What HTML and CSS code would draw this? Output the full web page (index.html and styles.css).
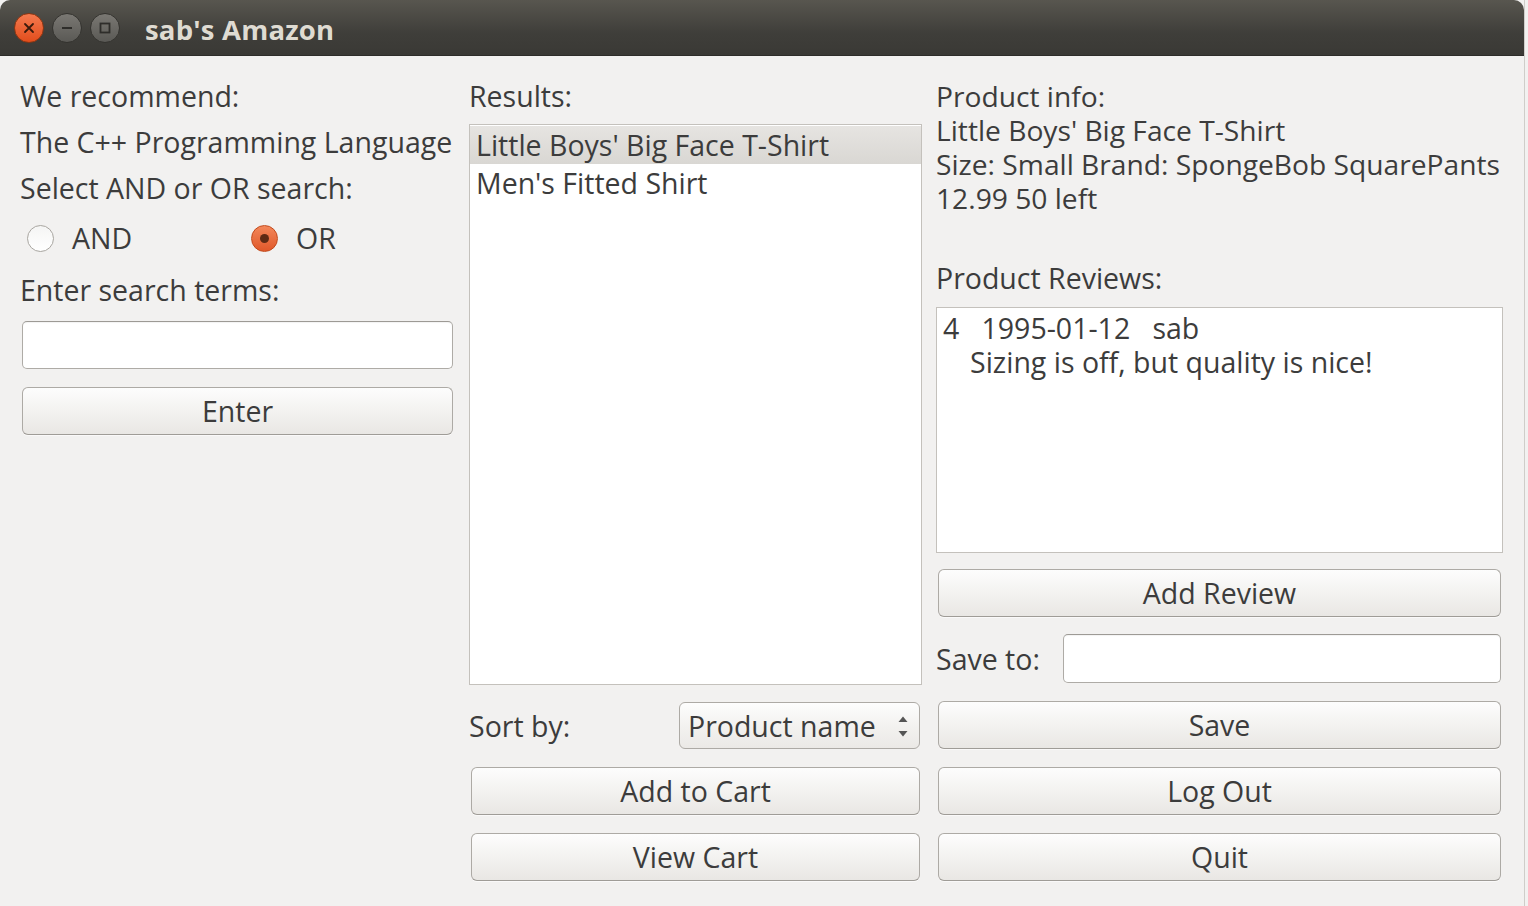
FILE: index.html
```html
<!DOCTYPE html>
<html>
<head>
<meta charset="utf-8">
<title>sab's Amazon</title>
<link rel="stylesheet" href="styles.css">
</head>
<body>
<div class="window">
  <div class="titlebar">
    <div class="wm-buttons">
      <span class="wm-btn close">
        <svg width="12" height="12" viewBox="0 0 12 12"><path d="M2 2 L10 10 M10 2 L2 10" stroke="#3a1a0c" stroke-width="1.8" stroke-linecap="round"/></svg>
      </span>
      <span class="wm-btn">
        <svg width="14" height="14" viewBox="0 0 14 14"><path d="M2 7 H12" stroke="#2e2d2a" stroke-width="2"/></svg>
      </span>
      <span class="wm-btn">
        <svg width="14" height="14" viewBox="0 0 14 14"><rect x="2.5" y="2.5" width="9" height="9" fill="none" stroke="#2e2d2a" stroke-width="1.8"/></svg>
      </span>
    </div>
    <div class="title">sab's Amazon</div>
  </div>

  <div class="content">
    <div class="col col-left">
      <div class="label row46">We recommend:</div>
      <div class="label row46">The C++ Programming Language</div>
      <div class="label row46">Select AND or OR search:</div>
      <div class="radios">
        <label class="radio"><span class="radio-dot"></span><span>AND</span></label>
        <label class="radio checked"><span class="radio-dot"></span><span>OR</span></label>
      </div>
      <div class="label row50">Enter search terms:</div>
      <div class="input search-input"></div>
      <div class="button enter-btn">Enter</div>
    </div>

    <div class="col col-mid">
      <div class="label row46">Results:</div>
      <div class="listbox">
        <div class="list-item selected">Little Boys' Big Face T-Shirt</div>
        <div class="list-item">Men's Fitted Shirt</div>
      </div>
      <div class="sort-row">
        <span class="label">Sort by:</span>
        <div class="combo">
          <span>Product name</span>
          <svg class="spin" width="14" height="30" viewBox="0 0 14 30"><path d="M2.5 11 L7 5.5 L11.5 11 Z" fill="#555"/><path d="M2.5 20 L7 25.5 L11.5 20 Z" fill="#555"/></svg>
        </div>
      </div>
      <div class="button btn-gap">Add to Cart</div>
      <div class="button btn-gap">View Cart</div>
    </div>

    <div class="col col-right">
      <div class="info">
        <div class="info-line">Product info:</div>
        <div class="info-line">Little Boys' Big Face T-Shirt</div>
        <div class="info-line">Size: Small Brand: SpongeBob SquarePants</div>
        <div class="info-line">12.99 50 left</div>
      </div>
      <div class="label row46 reviews-label">Product Reviews:</div>
      <div class="reviews">
        <div class="review-head">4&nbsp;&nbsp;&nbsp;1995-01-12&nbsp;&nbsp;&nbsp;sab</div>
        <div class="review-body">Sizing is off, but quality is nice!</div>
      </div>
      <div class="button review-btn">Add Review</div>
      <div class="save-row">
        <span class="label">Save to:</span>
        <div class="input save-input"></div>
      </div>
      <div class="button btn-gap">Save</div>
      <div class="button btn-gap">Log Out</div>
      <div class="button btn-gap">Quit</div>
    </div>
  </div>
</div>
</body>
</html>
```

FILE: styles.css
```css
html, body {
  margin: 0;
  padding: 0;
  background: #f2f1f0;
}

body {
  font-family: "Open Sans", "Noto Sans", "DejaVu Sans", sans-serif;
  font-size: 28.5px;
  color: #3c3c3c;
}

.window {
  width: 1525px;
  height: 906px;
  background: #f2f1f0;
  border-right: 1px solid #cfcdc9;
  display: flex;
  flex-direction: column;
  box-sizing: border-box;
}

.titlebar {
  height: 56px;
  flex: none;
  background: linear-gradient(#58564f, #3f3e3a 60%, #3a3935);
  border-radius: 10px 10px 0 0;
  display: flex;
  align-items: center;
  border-bottom: 1px solid #2e2d2a;
  box-sizing: border-box;
}

.wm-buttons {
  display: flex;
  gap: 8px;
  padding-left: 14px;
}

.wm-btn {
  width: 30px;
  height: 30px;
  border-radius: 50%;
  background: linear-gradient(#7a7873, #5a5955);
  border: 1px solid #34332f;
  box-sizing: border-box;
  display: flex;
  align-items: center;
  justify-content: center;
}

.wm-btn.close {
  background: linear-gradient(#f47a4f, #e24d1c);
  border-color: #8c3512;
}

.title {
  margin-left: 25px;
  font-weight: bold;
  font-size: 27.5px;
  color: #dfdbd2;
  letter-spacing: 0.2px;
  padding-top: 3px;
}

.content {
  flex: 1;
  display: grid;
  grid-template-columns: 435px 453px 567px;
  column-gap: 14px;
  padding: 17px 0 25px 20px;
}

.col {
  display: flex;
  flex-direction: column;
  min-height: 0;
}

.label {
  white-space: nowrap;
}

.row46 {
  height: 46px;
  line-height: 46px;
}

.row50 {
  height: 50px;
  line-height: 50px;
}

.radios {
  height: 54px;
  display: flex;
  align-items: center;
  padding-left: 7px;
}

.radio {
  display: flex;
  align-items: center;
  gap: 18px;
  width: 224px;
  flex: none;
}

.radio-dot {
  width: 27px;
  height: 27px;
  border-radius: 50%;
  border: 1px solid #a9a6a1;
  background: linear-gradient(#f5f5f4, #ffffff);
  box-sizing: border-box;
  display: flex;
  align-items: center;
  justify-content: center;
  flex: none;
}

.radio.checked .radio-dot {
  background: linear-gradient(#f3875a, #e0582a);
  border-color: #c24a1c;
}

.radio.checked .radio-dot::after {
  content: "";
  width: 9px;
  height: 9px;
  border-radius: 50%;
  background: #5e2a14;
}

.input {
  height: 48px;
  background: #ffffff;
  border: 1px solid #aeaba6;
  border-top-color: #9d9a95;
  border-radius: 5px;
  box-sizing: border-box;
  box-shadow: inset 0 1px 1px rgba(0,0,0,0.05);
}

.search-input {
  margin: 6px 2px 0 2px;
}

.button {
  height: 48px;
  line-height: 46px;
  text-align: center;
  border: 1px solid #adaaa5;
  border-bottom-color: #9f9c97;
  border-radius: 6px;
  background: linear-gradient(#fdfdfd, #f3f2f0 50%, #e9e7e4);
  box-sizing: border-box;
  margin: 0 2px;
  box-shadow: 0 1px 0 rgba(255,255,255,0.6);
}

.enter-btn {
  margin-top: 18px;
}

.btn-gap {
  margin-top: 18px;
}

.listbox {
  margin-top: 5px;
  flex: 1;
  background: #ffffff;
  border: 1px solid #c4c1bc;
  box-sizing: border-box;
  padding-top: 1px;
}

.list-item {
  height: 38px;
  line-height: 38px;
  padding-left: 6px;
  white-space: nowrap;
}

.list-item.selected {
  background: linear-gradient(#e6e4e1, #d9d7d3);
}

.sort-row {
  margin-top: 17px;
  height: 47px;
  display: flex;
  align-items: center;
  justify-content: space-between;
}

.combo {
  width: 241px;
  height: 47px;
  margin-right: 2px;
  border: 1px solid #adaaa5;
  border-radius: 6px;
  background: linear-gradient(#fdfdfd, #f3f2f0 50%, #ebe9e6);
  box-sizing: border-box;
  display: flex;
  align-items: center;
  justify-content: space-between;
  padding: 0 9px 0 8px;
}

.info {
  margin-top: 6px;
  white-space: nowrap;
  font-size: 28.2px;
}

.info-line {
  height: 34px;
  line-height: 34px;
}

.reviews-label {
  margin-top: 40px;
}

.reviews {
  margin-top: 6px;
  height: 246px;
  flex: none;
  background: #ffffff;
  border: 1px solid #c4c1bc;
  box-sizing: border-box;
  padding: 3px 0 0 6px;
  line-height: 34px;
}

.review-body {
  padding-left: 27px;
}

.review-btn {
  margin-top: 16px;
}

.save-row {
  margin-top: 17px;
  height: 49px;
  display: flex;
  align-items: center;
  gap: 23px;
}

.save-input {
  flex: 1;
  height: 49px;
  margin-right: 2px;
}
```
